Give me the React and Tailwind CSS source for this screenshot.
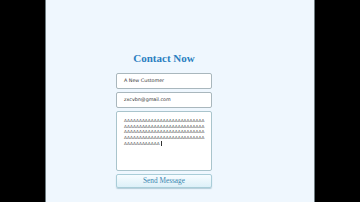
const lines = [
  "AAAAAAAAAAAAAAAAAAAAAAAAAAA",
  "AAAAAAAAAAAAAAAAAAAAAAAAAAA",
  "AAAAAAAAAAAAAAAAAAAAAAAAAAA",
  "AAAAAAAAAAAAAAAAAAAAAAAAAAA",
];

export default function App() {
  return (
    <div className="flex h-[202px] w-[360px] overflow-hidden bg-black">
      <div className="w-[45px] shrink-0 bg-black" />
      <div className="w-px shrink-0 bg-[#6f7c80]" />
      <div className="flex-1 bg-[#eff7fe] pl-[70px] pt-[49px]">
        <div className="flex w-[96px] flex-col">
          <h1 className="text-center font-['Liberation_Serif',serif] text-[11px] font-bold leading-[18px] text-[#2b7fc1]">
            Contact Now
          </h1>
          <div className="mt-[6px] flex h-[16px] items-center rounded-[2px] border border-[#a9b7bd] bg-white pl-[7px] font-['DejaVu_Sans',sans-serif] text-[4.8px] text-[#333]">
            A New Customer
          </div>
          <div className="mt-[3px] flex h-[16px] items-center rounded-[2px] border border-[#a9b7bd] bg-white pl-[7px] font-['DejaVu_Sans',sans-serif] text-[4.8px] text-[#333]">
            zxcvbn@gmail.com
          </div>
          <div className="mt-[3px] h-[60px] rounded-[2px] border border-[#a9c4cc] bg-white pl-[7px] pt-[6px] font-['DejaVu_Sans',sans-serif] text-[4.2px] leading-[5.7px] text-[#444]">
            {lines.map((l, i) => (
              <div key={i} className="whitespace-nowrap">{l}</div>
            ))}
            <div className="flex items-center whitespace-nowrap">
              AAAAAAAAAAAA
              <span className="ml-px inline-block h-[5px] w-px bg-[#333]" />
            </div>
          </div>
          <div className="mt-[3px] flex h-[14px] items-center justify-center rounded-[2px] border border-[#a9cdd8] bg-gradient-to-b from-[#f7fcff] to-[#ddf0f8] font-['Liberation_Serif',serif] text-[7.3px] text-[#3a86b0] shadow-[0_1px_1px_rgba(120,160,180,0.5)]">
            Send Message
          </div>
        </div>
      </div>
      <div className="w-px shrink-0 bg-[#6f7c80]" />
      <div className="w-[45px] shrink-0 bg-black" />
    </div>
  );
}
